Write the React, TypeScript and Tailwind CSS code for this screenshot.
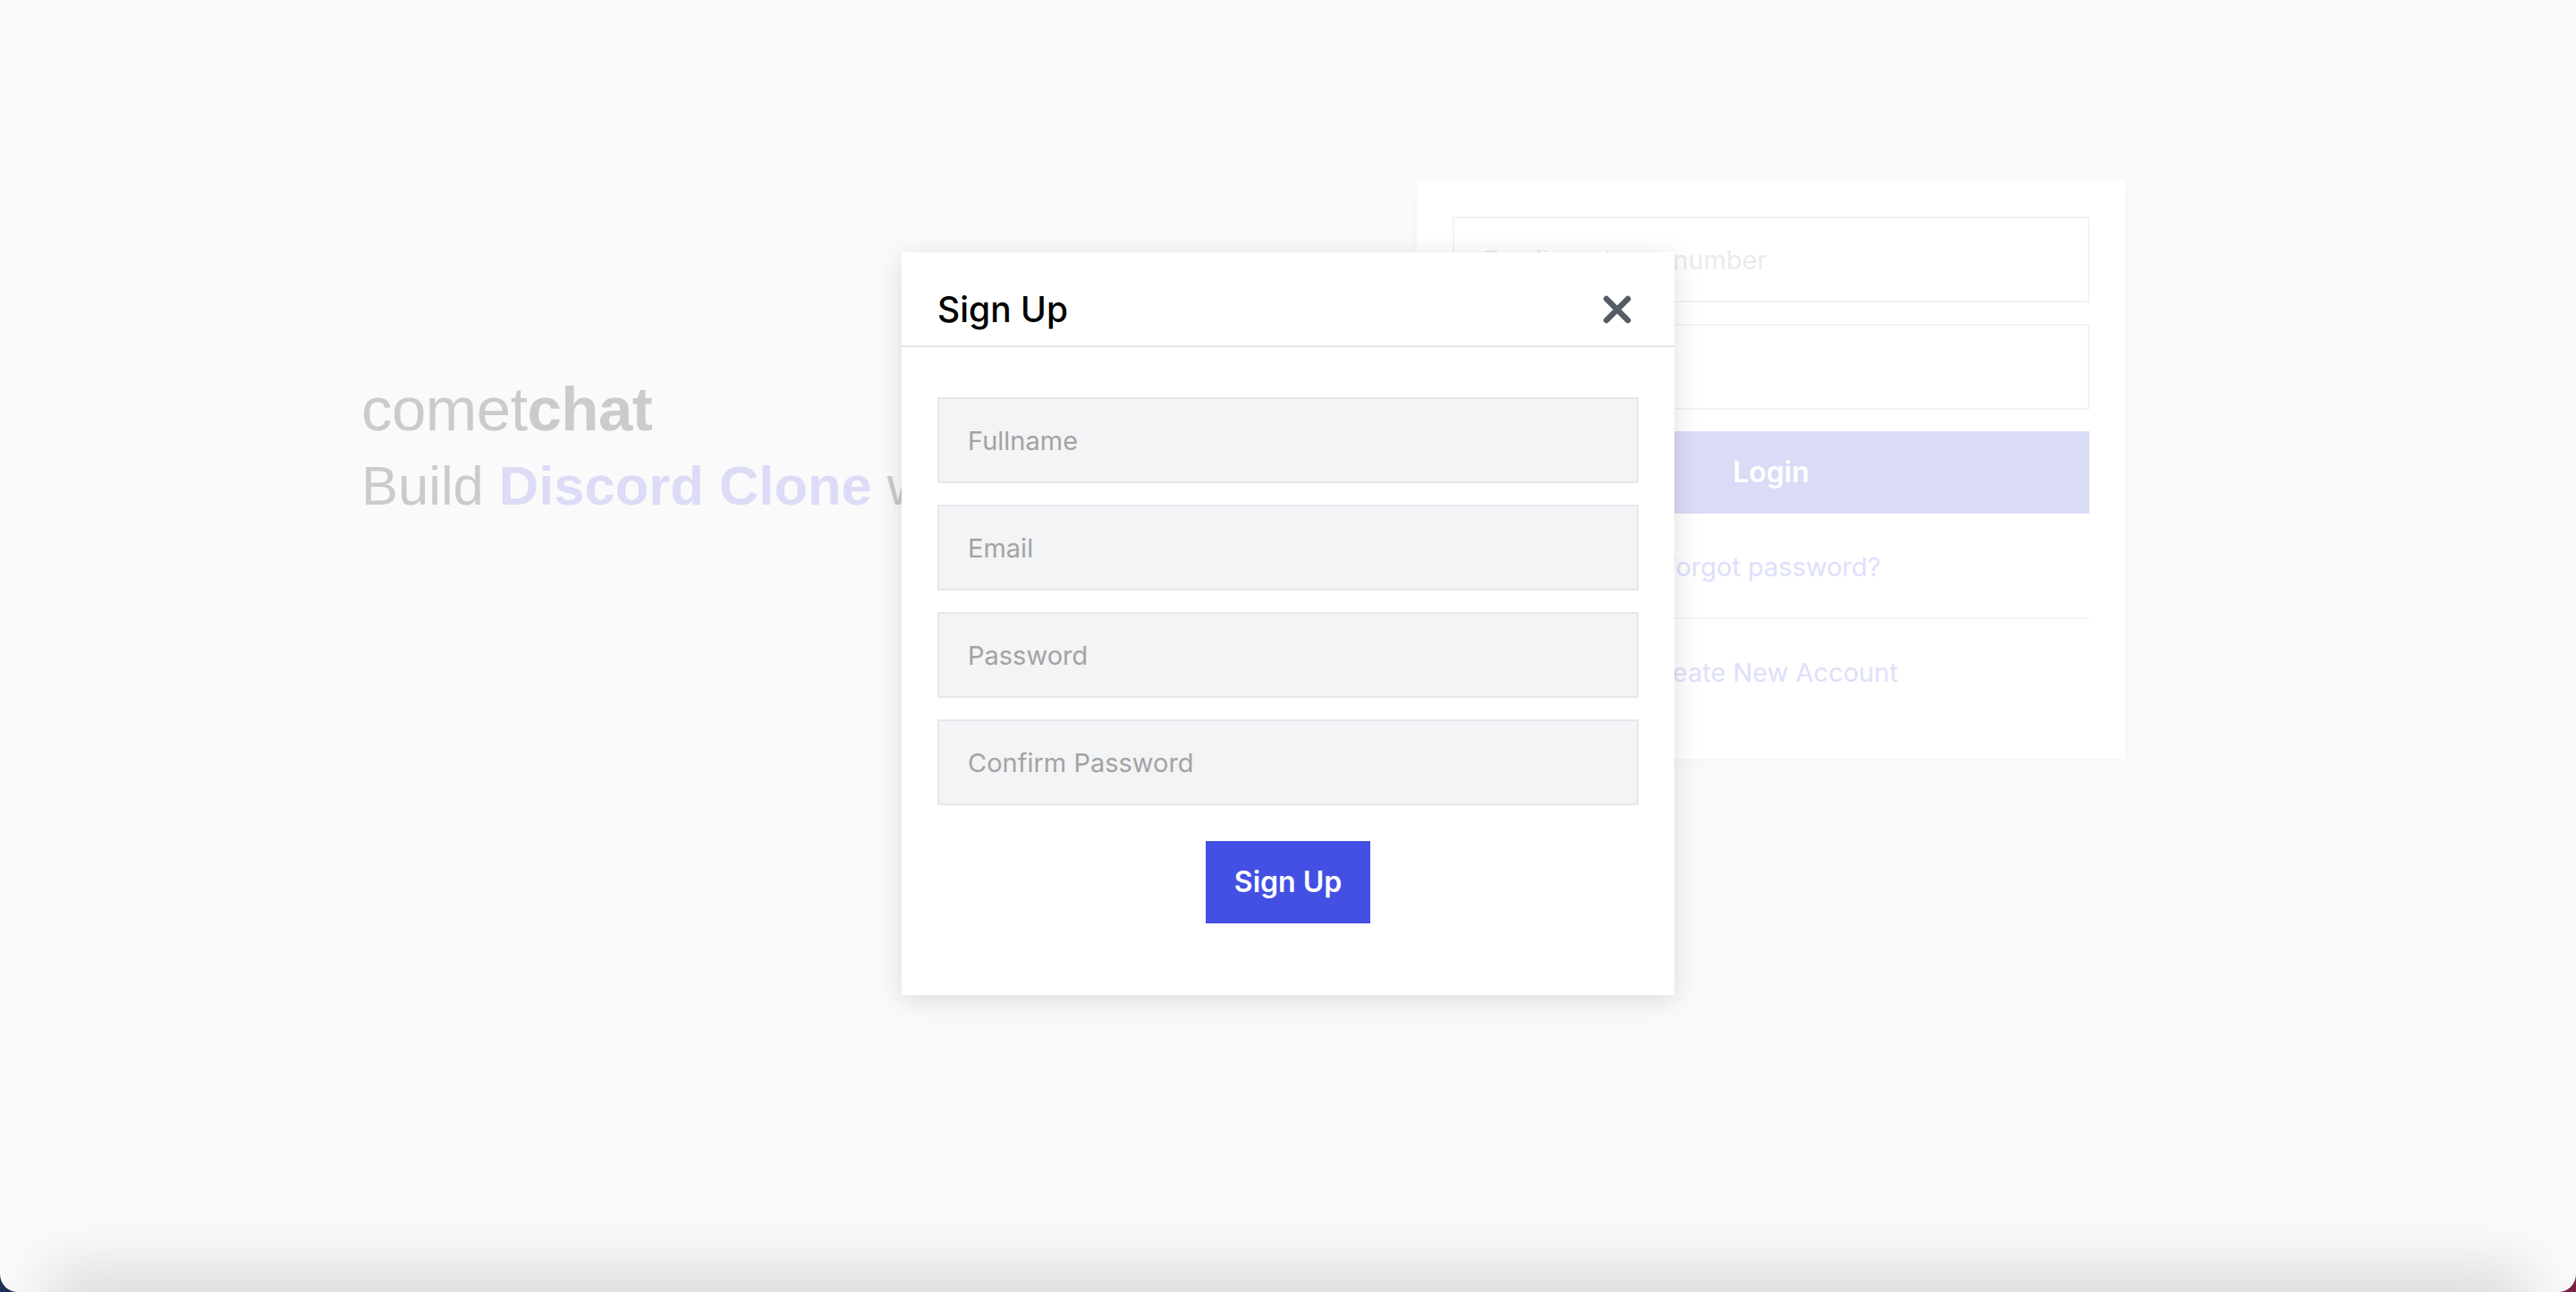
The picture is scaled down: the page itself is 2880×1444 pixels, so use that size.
import { useState } from 'react';

const fields = ['Fullname', 'Email', 'Password', 'Confirm Password'];

function CloseIcon() {
  return (
    <svg width="32" height="32" viewBox="0 0 32 32" fill="none">
      <path d="M4 4L28 28M28 4L4 28" stroke="#555c66" strokeWidth="6.5" strokeLinecap="round" />
    </svg>
  );
}

export default function App() {
  const [open, setOpen] = useState(true);

  return (
    <div className="w-full h-[1444px] bg-gradient-to-r from-[#1b2f57] to-[#7c2047]">
      <div className="relative w-full h-full bg-[#fafafa] rounded-b-[20px] overflow-hidden">
        {/* page behind the backdrop */}
        <div className="flex pt-[202px] pl-[404px]">
          <div className="w-[1180px] pt-[216px] font-['Liberation_Sans',Arial,sans-serif] text-[#cbcbcb]">
            <h1 className="text-[69px] leading-[80px] tracking-[-0.5px]">
              comet<span className="font-bold">chat</span>
            </h1>
            <p className="mt-[5px] text-[61.5px] leading-[80px] whitespace-nowrap">
              Build <span className="font-bold text-[#dcdcf8]">Discord Clone</span> with React
            </p>
          </div>

          <div className="w-[792px] h-[646px] bg-white p-[40px] shadow-[0_2px_16px_rgba(0,0,0,0.025)] font-['Inter',sans-serif]">
            <div className="flex flex-col gap-[24px]">
              <input
                placeholder="Email or phone number"
                className="h-[96px] w-full border-2 border-[#f3f3f3] bg-white px-[32px] text-[29px] outline-none placeholder:text-[#ebebeb]"
              />
              <input
                type="password"
                placeholder="Password"
                className="h-[96px] w-full border-2 border-[#f3f3f3] bg-white px-[32px] text-[29px] outline-none placeholder:text-[#ebebeb]"
              />
              <button className="h-[92px] w-full bg-[#dadbf7] text-[32px] font-semibold text-white">Login</button>
            </div>
            <p className="mt-[40px] text-center text-[29px] leading-[40px] text-[#dee0fa]">Forgot password?</p>
            <div className="mt-[36px] h-[2px] bg-[#f4f4f4]" />
            <p className="mt-[40px] text-center text-[29px] leading-[40px] text-[#dee0fa]">Create New Account</p>
          </div>
        </div>

        {/* modal */}
        {open && (
          <div className="absolute inset-0 flex justify-center pt-[282px] font-['Inter',sans-serif]">
            <div className="w-[864px] h-[830px] bg-white shadow-[0_6px_28px_rgba(0,0,0,0.13)]">
              <div className="h-[106px] pt-[24px] pl-[40px] pr-[48px] border-b-2 border-[#e5e7eb]">
                <div className="h-[80px] flex items-center justify-between">
                  <h2 className="text-[39px] font-medium text-black">Sign Up</h2>
                  <button onClick={() => setOpen(false)} className="flex items-center justify-center">
                    <CloseIcon />
                  </button>
                </div>
              </div>
              <div className="px-[40px] pt-[56px] pb-[80px] flex flex-col items-center">
                <div className="w-full flex flex-col gap-[24px]">
                  {fields.map((f) => (
                    <input
                      key={f}
                      type={f.includes('Password') ? 'password' : 'text'}
                      placeholder={f}
                      className="h-[96px] w-full border-2 border-[#e5e7eb] bg-[#f3f4f6] px-[32px] text-[29px] text-gray-700 outline-none placeholder:text-[#a3a3a3]"
                    />
                  ))}
                </div>
                <button className="mt-[40px] h-[92px] px-[32px] bg-[#4350e3] text-[32px] font-semibold text-white">
                  Sign Up
                </button>
              </div>
            </div>
          </div>
        )}

        {/* bottom window shadow */}
        <div className="absolute left-[80px] right-[80px] bottom-[-40px] h-[40px] shadow-[0_0_64px_28px_rgba(0,0,0,0.12)]" />
      </div>
    </div>
  );
}
